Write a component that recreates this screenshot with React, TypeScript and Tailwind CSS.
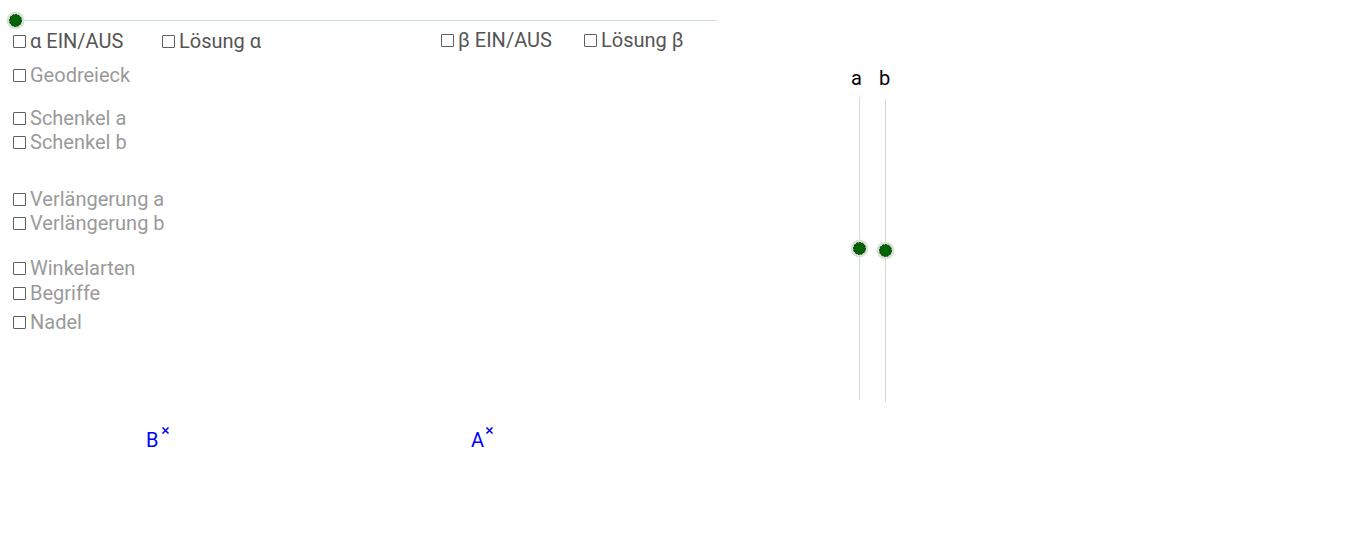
import React from 'react';

// one GeoGebra-style checkbox: small square + caption
const Check = ({ label, dark, className = '' }: { label: string; dark?: boolean; className?: string }) => (
    <label className={`flex items-center h-[24px] text-[20px] leading-none whitespace-nowrap ${className}`}>
        <span className="w-[13px] h-[13px] border border-[#5f5f5f] rounded-[1px] mr-[4px] shrink-0" />
        <span className={dark ? 'text-[#555555]' : 'text-[#9a9a9a]'}>{label}</span>
    </label>
);

const SliderPoint = ({ cx, cy }: { cx: number; cy: number }) => (
    <g>
        <circle cx={cx} cy={cy} r={9} fill="#d3e6d3" />
        <circle cx={cx} cy={cy} r={6} fill="#006400" stroke="#1a1a1a" strokeWidth={1} strokeDasharray="2 1" />
    </g>
);

const Cross = ({ x, y }: { x: number; y: number }) => (
    <path d={`M${x - 3} ${y - 3} L${x + 3} ${y + 3} M${x + 3} ${y - 3} L${x - 3} ${y + 3}`} stroke="#0000ff" strokeWidth={1.6} />
);

const App: React.FC = () => {
    return (
        <div className="relative w-[1366px] h-[558px] overflow-hidden bg-white font-['Roboto','Liberation_Sans',sans-serif]">
            <svg className="absolute inset-0" width={1366} height={558}>
                {/* sliders */}
                <line x1={15} y1={20.5} x2={717} y2={20.5} stroke="#cde3cd" strokeWidth={1} />
                <line x1={859.5} y1={97} x2={859.5} y2={400} stroke="#d2ddd2" strokeWidth={1} />
                <line x1={885.5} y1={99} x2={885.5} y2={402} stroke="#d2ddd2" strokeWidth={1} />
                <SliderPoint cx={15.5} cy={20.5} />
                <SliderPoint cx={859.5} cy={248.5} />
                <SliderPoint cx={885.5} cy={250.5} />
                {/* points A, B */}
                <Cross x={165.5} y={430.5} />
                <Cross x={489.5} y={430.5} />
            </svg>

            {/* checkbox panel */}
            <div className="relative flex flex-col pl-[13px] pt-[29px]">
                <div className="flex items-center">
                    <Check label="α EIN/AUS" dark className="w-[149px]" />
                    <Check label="Lösung α" dark className="w-[279px]" />
                    <Check label="β EIN/AUS" dark className="w-[143px] -mt-[2px]" />
                    <Check label="Lösung β" dark className="-mt-[2px]" />
                </div>
                <Check label="Geodreieck" className="mt-[10px]" />
                <Check label="Schenkel a" className="mt-[19px]" />
                <Check label="Schenkel b" />
                <Check label="Verlängerung a" className="mt-[33px]" />
                <Check label="Verlängerung b" />
                <Check label="Winkelarten" className="mt-[21px]" />
                <Check label="Begriffe" className="mt-[1px]" />
                <Check label="Nadel" className="mt-[5px]" />
            </div>

            {/* slider names and point labels */}
            <span className="absolute left-[851px] top-[68px] text-[20px] leading-none text-black">a</span>
            <span className="absolute left-[879px] top-[68px] text-[20px] leading-none text-black">b</span>
            <span className="absolute left-[146px] top-[430px] text-[20px] leading-none text-[#0000ff]">B</span>
            <span className="absolute left-[471px] top-[430px] text-[20px] leading-none text-[#0000ff]">A</span>
        </div>
    );
};

export default App;
